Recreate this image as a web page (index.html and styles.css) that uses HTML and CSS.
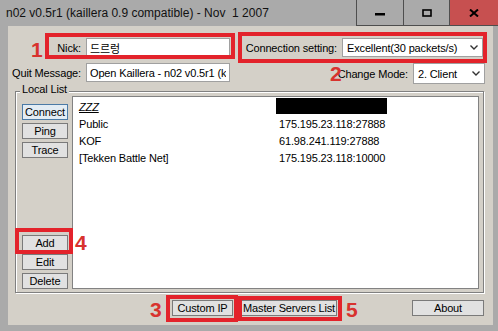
FILE: index.html
```html
<!DOCTYPE html>
<html lang="en">
<head>
    <meta charset="UTF-8">
    <title>n02 v0.5r1</title>
    <link rel="stylesheet" href="styles.css">
</head>

<body>

    <div class="window">

        <div class="titlebar">
            <span class="title">n02 v0.5r1 (kaillera 0.9 compatible) - Nov  1 2007</span>
            <div class="caption-buttons">
                <span class="cap-btn cap-min">
                    <svg width="10" height="10" viewBox="0 0 10 10"><rect x="0" y="5" width="10" height="2.5" fill="#000"/></svg>
                </span>
                <span class="cap-btn cap-max">
                    <svg width="10" height="8" viewBox="0 0 10 8"><rect x="1" y="1" width="8" height="6" fill="none" stroke="#000" stroke-width="1.6"/></svg>
                </span>
                <span class="cap-btn cap-close">
                    <svg width="10" height="8" viewBox="0 0 10 8"><path d="M1 0.5 L9 7.5 M9 0.5 L1 7.5" stroke="#000" stroke-width="2"/></svg>
                </span>
            </div>
        </div>

        <div class="client">

            <div class="top-area">
                <div class="user-fields">
                    <label class="field-label" for="nick">Nick:</label>
                    <input class="text-field" id="nick" type="text" value="드르렁">
                    <label class="field-label" for="quit">Quit Message:</label>
                    <input class="text-field" id="quit" type="text" value="Open Kaillera - n02 v0.5r1 (kaillera 0.9 compatible)">
                </div>

                <div class="conn-fields">
                    <div class="combo-row conn-row">
                        <span>Connection setting:</span>
                        <div class="combo combo-wide">
                            <span>Excellent(30 packets/s)</span>
                            <svg width="8" height="5" viewBox="0 0 8 5"><path d="M0.5 0.5 L4 4 L7.5 0.5" fill="none" stroke="#333" stroke-width="1.4"/></svg>
                        </div>
                    </div>
                    <div class="combo-row">
                        <span>Change Mode:</span>
                        <div class="combo combo-narrow">
                            <span>2. Client</span>
                            <svg width="8" height="5" viewBox="0 0 8 5"><path d="M0.5 0.5 L4 4 L7.5 0.5" fill="none" stroke="#333" stroke-width="1.4"/></svg>
                        </div>
                    </div>
                </div>
            </div>

            <div class="group">
                <div class="group-title">Local List</div>
                <div class="group-body">
                    <div class="side-buttons">
                        <div class="btn-stack">
                            <div class="btn btn-default">Connect</div>
                            <div class="btn">Ping</div>
                            <div class="btn">Trace</div>
                        </div>
                        <div class="btn-stack">
                            <div class="btn">Add</div>
                            <div class="btn">Edit</div>
                            <div class="btn">Delete</div>
                        </div>
                    </div>

                    <div class="server-list">
                        <div class="list-row">
                            <div class="list-name name-odd">ZZZ</div>
                            <div class="list-addr"><div class="redacted"></div></div>
                        </div>
                        <div class="list-row">
                            <div class="list-name">Public</div>
                            <div class="list-addr">175.195.23.118:27888</div>
                        </div>
                        <div class="list-row">
                            <div class="list-name">KOF</div>
                            <div class="list-addr">61.98.241.119:27888</div>
                        </div>
                        <div class="list-row">
                            <div class="list-name">[Tekken Battle Net]</div>
                            <div class="list-addr">175.195.23.118:10000</div>
                        </div>
                    </div>
                </div>
            </div>

            <div class="bottom-bar">
                <div class="btn btn-custom">Custom IP</div>
                <div class="btn btn-master">Master Servers List</div>
                <div class="btn btn-about">About</div>
            </div>

        </div>

        <!-- tutorial markers drawn over the dialog -->
        <div class="mark mark-nick"></div>
        <div class="mark mark-conn"></div>
        <div class="mark mark-add"></div>
        <div class="mark mark-custom"></div>
        <div class="mark mark-master"></div>

        <span class="step step-1">1</span>
        <span class="step step-2">2</span>
        <span class="step step-3">3</span>
        <span class="step step-4">4</span>
        <span class="step step-5">5</span>

    </div>

</body>
</html>
```

FILE: styles.css
```css
body {
    margin: 0;
    background-color: #aaaaaa;
    font-family: "Liberation Sans", Arial, sans-serif;
    font-size: 11px;
    color: #000;
}

.window {
    position: relative;
    width: 498px;
    height: 331px;
    background: #aaaaaa;
    display: flex;
    flex-direction: column;
    overflow: hidden;
}

.titlebar {
    height: 26px;
    display: flex;
    align-items: flex-start;
}

.title {
    flex: 1;
    white-space: pre;
    font-size: 12px;
    line-height: 26px;
    padding-left: 6px;
    color: #111;
}

.caption-buttons {
    display: flex;
    height: 25px;
    border-left: 1px solid #4e4e4e;
    border-bottom: 1px solid #4e4e4e;
}

.cap-btn {
    height: 25px;
    display: flex;
    align-items: center;
    justify-content: center;
    border-right: 1px solid #4e4e4e;
}

.cap-min {
    width: 46px;
}

.cap-max {
    width: 45px;
}

.cap-close {
    width: 48px;
    border-right: none;
    background: #c75050;
}

.client {
    flex: 1;
    margin: 0 5px 6px 8px;
    padding-top: 12px;
    background: #d4d0c8;
    box-sizing: border-box;
    letter-spacing: -0.15px;
}

.top-area {
    display: flex;
    height: 46px;
}

.user-fields {
    display: grid;
    grid-template-columns: 73px 144px;
    grid-auto-rows: 19px;
    column-gap: 5px;
    row-gap: 6px;
    align-items: center;
}

.field-label {
    text-align: right;
}

.text-field {
    width: 144px;
    height: 19px;
    margin: 0;
    padding: 0 3px;
    box-sizing: border-box;
    border: 1px solid #a0a0a0;
    background: #fff;
    font-family: "Liberation Sans", "Noto Sans CJK KR", sans-serif;
    font-size: 11px;
    letter-spacing: -0.15px;
    color: #000;
    outline: none;
}

.conn-fields {
    margin-left: auto;
    padding-right: 8px;
    display: flex;
    flex-direction: column;
    align-items: flex-end;
    gap: 6px;
}

.combo-row {
    display: flex;
    align-items: center;
    gap: 5px;
}

.conn-row {
    margin-right: 2px;
}

.combo {
    display: flex;
    align-items: center;
    justify-content: space-between;
    padding: 0 4px 0 4px;
    box-sizing: border-box;
    border: 1px solid #a0a0a0;
    background: #fff;
}

.combo-wide {
    width: 141px;
    height: 19px;
}

.combo-narrow {
    width: 72px;
    height: 21px;
}

.group {
    width: 469px;
    height: 202px;
    margin: 7px 0 0 7px;
    box-sizing: border-box;
    border: 1px solid #808080;
    box-shadow: 1px 1px 0 #fff, inset 1px 1px 0 #fff;
    display: flex;
    flex-direction: column;
}

.group-title {
    align-self: flex-start;
    height: 13px;
    line-height: 13px;
    margin: -9px 0 0 4px;
    padding: 0 2px;
    background: #d4d0c8;
}

.group-body {
    flex: 1;
    min-height: 0;
    display: flex;
    gap: 4px;
    padding: 0 4px 3px 6px;
}

.side-buttons {
    width: 46px;
    padding-top: 8px;
    display: flex;
    flex-direction: column;
    justify-content: space-between;
}

.btn-stack {
    display: flex;
    flex-direction: column;
    gap: 3px;
}

.btn {
    height: 16px;
    box-sizing: border-box;
    border: 1px solid #7a7a7a;
    background: #e1e1e1;
    text-align: center;
    line-height: 14px;
    white-space: nowrap;
}

.btn-default {
    border-color: #4b7aa6;
    background: #e3ecf4;
}

.server-list {
    flex: 1;
    padding-top: 2px;
    border: 1px solid #828282;
    background: #fff;
}

.list-row {
    display: flex;
    height: 17px;
    line-height: 17px;
}

.list-name {
    width: 200px;
    padding-left: 6px;
}

.name-odd {
    font-style: italic;
    text-decoration: underline;
}

.redacted {
    width: 111px;
    height: 16px;
    margin: -1px 0 0 -3px;
    background: #000;
}

.bottom-bar {
    display: flex;
    height: 16px;
    margin-top: 7px;
}

.btn-custom {
    width: 61px;
    margin-left: 164px;
}

.btn-master {
    width: 96px;
    margin-left: 8px;
}

.btn-about {
    width: 72px;
    margin-left: auto;
    margin-right: 9px;
}

.mark {
    position: absolute;
    box-sizing: border-box;
    border: 4px solid #e3232b;
}

.mark-nick {
    left: 45px;
    top: 33px;
    width: 190px;
    height: 26px;
}

.mark-conn {
    left: 238px;
    top: 32px;
    width: 249px;
    height: 31px;
}

.mark-add {
    left: 15px;
    top: 228px;
    width: 58px;
    height: 26px;
}

.mark-custom {
    left: 166px;
    top: 295px;
    width: 72px;
    height: 27px;
}

.mark-master {
    left: 238px;
    top: 296px;
    width: 104px;
    height: 25px;
}

.step {
    position: absolute;
    color: #d8322e;
    font-family: "Liberation Sans", Arial, sans-serif;
    font-weight: bold;
    font-size: 21px;
    line-height: 21px;
}

.step-1 {
    left: 31px;
    top: 39px;
}

.step-2 {
    left: 330px;
    top: 63px;
}

.step-3 {
    left: 150px;
    top: 299px;
}

.step-4 {
    left: 75px;
    top: 232px;
}

.step-5 {
    left: 346px;
    top: 299px;
}
```
